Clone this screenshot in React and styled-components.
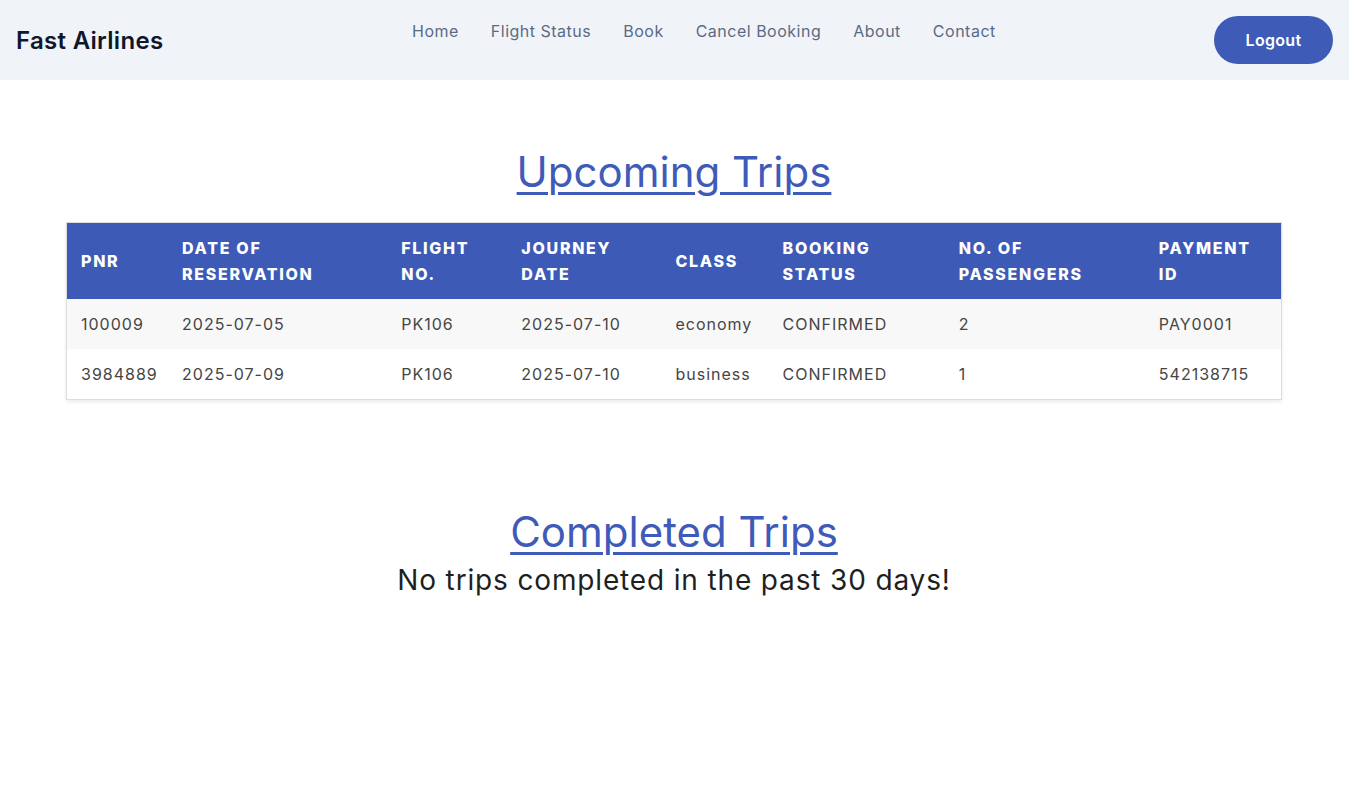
import React from "react";
import styled, { createGlobalStyle } from "styled-components";

const GlobalStyle = createGlobalStyle`
  body {
    margin: 0;
    font-family: Inter, "Noto Sans", sans-serif;
    background: #ffffff;
  }
`;

const upcoming = [
  {
    pnr: "100009",
    reserved: "2025-07-05",
    flight: "PK106",
    journey: "2025-07-10",
    cls: "economy",
    status: "CONFIRMED",
    passengers: "2",
    payment: "PAY0001",
  },
  {
    pnr: "3984889",
    reserved: "2025-07-09",
    flight: "PK106",
    journey: "2025-07-10",
    cls: "business",
    status: "CONFIRMED",
    passengers: "1",
    payment: "542138715",
  },
];

const columns = [
  { label: "PNR", width: 101 },
  { label: "Date of Reservation", width: 219 },
  { label: "Flight No.", width: 120 },
  { label: "Journey Date", width: 154 },
  { label: "Class", width: 107 },
  { label: "Booking Status", width: 176 },
  { label: "No. of Passengers", width: 200 },
  { label: "Payment ID", width: 136 },
];

const App = () => {
  return (
    <Page>
      <GlobalStyle />
      <Navbar>
        <Logo>Fast Airlines</Logo>
        <NavLinks>
          <NavLink>Home</NavLink>
          <NavLink>Flight Status</NavLink>
          <NavLink>Book</NavLink>
          <NavLink>Cancel Booking</NavLink>
          <NavLink>About</NavLink>
          <NavLink>Contact</NavLink>
        </NavLinks>
        <LogoutButton>Logout</LogoutButton>
      </Navbar>

      <Main>
        <SectionTitle>Upcoming Trips</SectionTitle>
        <TableCard>
          <Table>
            <colgroup>
              {columns.map((c) => (
                <col key={c.label} style={{ width: c.width }} />
              ))}
            </colgroup>
            <thead>
              <tr>
                {columns.map((c) => (
                  <HeadCell key={c.label}>{c.label}</HeadCell>
                ))}
              </tr>
            </thead>
            <tbody>
              {upcoming.map((t, i) => (
                <Row key={t.pnr} $striped={i % 2 === 0}>
                  <Cell>{t.pnr}</Cell>
                  <Cell>{t.reserved}</Cell>
                  <Cell>{t.flight}</Cell>
                  <Cell>{t.journey}</Cell>
                  <Cell>{t.cls}</Cell>
                  <Cell>{t.status}</Cell>
                  <Cell>{t.passengers}</Cell>
                  <Cell>{t.payment}</Cell>
                </Row>
              ))}
            </tbody>
          </Table>
        </TableCard>

        <CompletedSection>
          <SectionTitle>Completed Trips</SectionTitle>
          <EmptyText>No trips completed in the past 30 days!</EmptyText>
        </CompletedSection>
      </Main>
    </Page>
  );
};

const Page = styled.div`
  min-height: 100vh;
  background: #ffffff;
`;

const Navbar = styled.header`
  height: 80px;
  background: #f0f4f9;
  display: flex;
  align-items: center;
  padding: 0 16px;
`;

const Logo = styled.div`
  width: 200px;
  font-size: 24px;
  font-weight: 600;
  letter-spacing: 0.3px;
  color: #0f172a;
`;

const NavLinks = styled.nav`
  display: flex;
  gap: 32px;
  align-self: flex-start;
  margin-top: 21px;
  margin-left: 196px;
`;

const NavLink = styled.a`
  font-size: 16px;
  letter-spacing: 0.5px;
  line-height: 20px;
  color: #5b6a84;
  cursor: pointer;
`;

const LogoutButton = styled.button`
  margin-left: auto;
  width: 119px;
  height: 48px;
  border: none;
  border-radius: 24px;
  background: #3d5bb7;
  color: #ffffff;
  font-family: inherit;
  font-size: 16px;
  font-weight: 600;
  letter-spacing: 0.3px;
  cursor: pointer;
`;

const Main = styled.main`
  padding: 0 68px 60px 67px;
  display: flex;
  flex-direction: column;
  align-items: center;
`;

const SectionTitle = styled.h2`
  margin: 66px 0 24px;
  font-size: 42px;
  font-weight: 400;
  line-height: 52px;
  color: #3f5bb9;
  text-decoration: underline;
  text-decoration-thickness: 3px;
  text-underline-offset: 5px;
`;

const TableCard = styled.div`
  width: 100%;
  border: 1px solid #dddddd;
  box-shadow: 0 2px 4px rgba(0, 0, 0, 0.08);
`;

const Table = styled.table`
  width: 100%;
  border-collapse: collapse;
  table-layout: fixed;
`;

const HeadCell = styled.th`
  height: 76px;
  padding: 0 13px 0 14px;
  background: #3d5ab6;
  color: #ffffff;
  text-align: left;
  text-transform: uppercase;
  font-size: 16px;
  font-weight: 800;
  letter-spacing: 1.7px;
  line-height: 26px;
`;

const Row = styled.tr`
  background: ${(p) => (p.$striped ? "#f8f8f8" : "#ffffff")};
`;

const Cell = styled.td`
  height: 50px;
  padding: 0 13px 0 14px;
  font-size: 16px;
  letter-spacing: 1px;
  color: #454545;
  white-space: nowrap;
`;

const CompletedSection = styled.section`
  margin-top: 40px;
  display: flex;
  flex-direction: column;
  align-items: center;
`;

const EmptyText = styled.p`
  margin: -19px 0 0;
  font-size: 28px;
  letter-spacing: 0.85px;
  color: #1f1f1f;
`;

export default App;
